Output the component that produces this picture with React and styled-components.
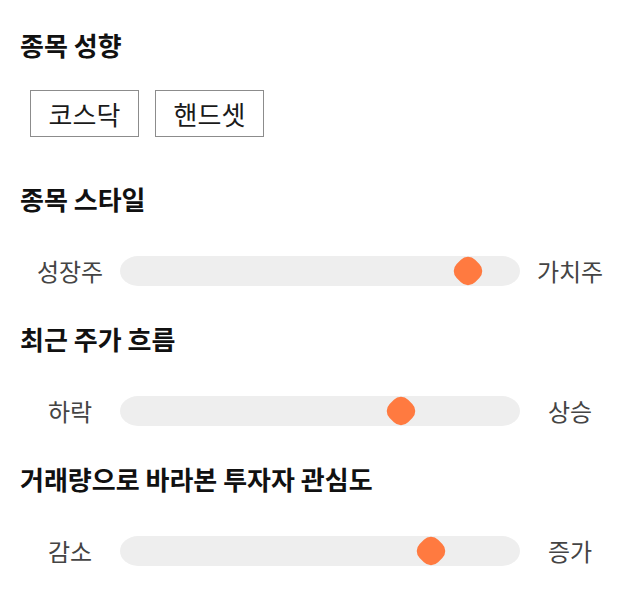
import React from 'react';
import styled, { createGlobalStyle } from 'styled-components';

const GlobalStyle = createGlobalStyle`
  html, body {
    margin: 0;
    padding: 0;
    background: #ffffff;
  }
  body {
    font-family: "Noto Sans CJK KR", "Noto Sans", sans-serif;
    color: #111111;
  }
`;

const Page = styled.div`
  width: 640px;
  padding: 29px 20px 0;
  box-sizing: border-box;
`;

const Section = styled.section`
  margin-bottom: ${(p) => p.$after}px;
`;

const Title = styled.h2`
  margin: 0 0 ${(p) => p.$gap}px;
  font-size: 26px;
  line-height: 32px;
  font-weight: 700;
  color: #111111;
`;

const Chips = styled.div`
  display: flex;
  gap: 16px;
  padding-left: 10px;
`;

const Chip = styled.button`
  display: flex;
  align-items: center;
  justify-content: center;
  height: 47px;
  width: 109px;
  box-sizing: border-box;
  padding: 0;
  border: 1px solid #8c8c8c;
  background: #ffffff;
  font-family: inherit;
  font-size: 26px;
  color: #1a1a1a;
  cursor: pointer;
`;

const SliderRow = styled.div`
  display: grid;
  grid-template-columns: 100px 1fr 100px;
  align-items: center;
  height: 30px;
`;

const Label = styled.span`
  text-align: center;
  font-size: 24px;
  line-height: 30px;
  color: #444444;
`;

const Track = styled.div`
  position: relative;
  height: 30px;
  border-radius: 18px / 15px;
  background: #eeeeee;
`;

const Thumb = styled.div`
  position: absolute;
  top: 50%;
  width: 26px;
  height: 26px;
  border-radius: 10px;
  background: #ff7a40;
  transform: translate(-50%, -50%) rotate(45deg);
`;

function Slider({ left, right, value }) {
  // thumb travels between the two rounded ends (15px inset each side)
  return (
    <SliderRow>
      <Label>{left}</Label>
      <Track>
        <Thumb style={{ left: `calc(15px + (100% - 30px) * ${value})` }} />
      </Track>
      <Label>{right}</Label>
    </SliderRow>
  );
}

export default function App() {
  return (
    <>
      <GlobalStyle />
      <Page>
        <Section $after={46}>
          <Title $gap={29}>종목 성향</Title>
          <Chips>
            <Chip>코스닥</Chip>
            <Chip>핸드셋</Chip>
          </Chips>
        </Section>
        <Section $after={37}>
          <Title $gap={41}>종목 스타일</Title>
          <Slider left="성장주" right="가치주" value={0.9} />
        </Section>
        <Section $after={37}>
          <Title $gap={41}>최근 주가 흐름</Title>
          <Slider left="하락" right="상승" value={0.72} />
        </Section>
        <Section $after={0}>
          <Title $gap={41}>거래량으로 바라본 투자자 관심도</Title>
          <Slider left="감소" right="증가" value={0.8} />
        </Section>
      </Page>
    </>
  );
}
